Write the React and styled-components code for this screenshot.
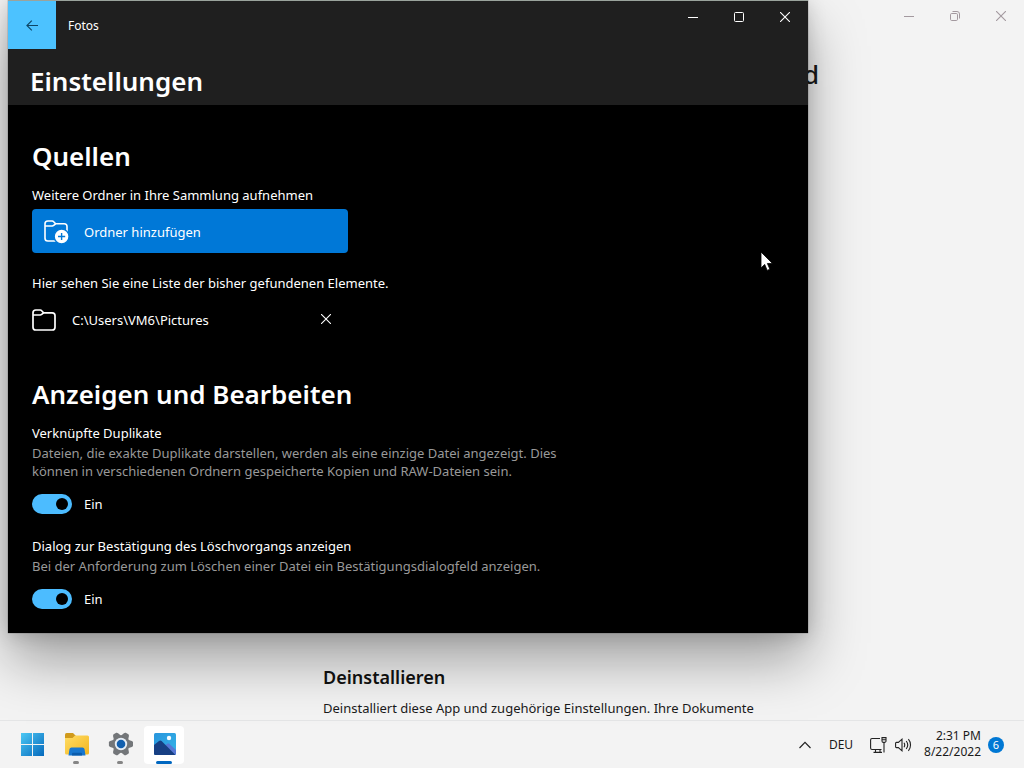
import React from "react";
import styled, { createGlobalStyle, css } from "styled-components";

const GlobalStyle = createGlobalStyle`
  *, *::before, *::after { box-sizing: border-box; }
  html, body { margin: 0; padding: 0; }
  body {
    font-family: "Segoe UI", "Noto Sans", sans-serif;
    font-size: 13px;
    background: #f3f3f3;
    overflow: hidden;
  }
  button { font: inherit; color: inherit; border: 0; padding: 0; background: none; }
  h1, h2, h3, p, ul { margin: 0; padding: 0; }
`;

const Desktop = styled.div`
  position: relative;
  display: flex;
  flex-direction: column;
  height: 100vh;
  color: #1a1a1a;
`;

/* Settings window in the background */
const SettingsWindow = styled.section`
  flex: 1;
  min-height: 0;
  display: flex;
  flex-direction: column;
  background: #f3f3f3;
  overflow: hidden;
`;

const Captions = styled.div`
  display: flex;
  justify-content: flex-end;
  flex: none;
  color: ${(p) => (p.$muted ? "#a3999f" : "#ffffff")};
`;

const CaptionButton = styled.button`
  width: 46px;
  height: 32px;
  display: grid;
  place-items: center;
`;

const SettingsTitle = styled.h1`
  padding: 24px 205px 0 0;
  text-align: right;
  font-size: 26px;
  line-height: 36px;
  font-weight: 500;
`;

const Uninstall = styled.div`
  margin-top: auto;
  padding: 0 24px 2px 323px;
`;

const UninstallTitle = styled.h2`
  font-size: 18px;
  line-height: 24px;
  font-weight: 600;
  color: #111;
  margin-bottom: 9px;
`;

const UninstallText = styled.p`
  line-height: 20px;
`;

/* Photos window */
const PhotosWindow = styled.main`
  position: absolute;
  top: 0;
  left: 8px;
  right: 216px;
  background: #000;
  color: #fff;
  border-top: 1px solid #9aa39c;
  box-shadow: 0 0 1px rgba(0, 0, 0, 0.6), 0 28px 52px rgba(0, 0, 0, 0.34), 0 2px 18px rgba(0, 0, 0, 0.16);
`;

const Header = styled.header`
  background: #1f1f1f;
`;

const TitleBar = styled.div`
  display: flex;
  height: 48px;
`;

const BackButton = styled.button`
  width: 48px;
  display: grid;
  place-items: center;
  background: #4cc2ff;
  color: #0d4565;
`;

const AppName = styled.span`
  flex: 1;
  padding-left: 12px;
  font-size: 12px;
  line-height: 50px;
`;

const PageTitle = styled.h1`
  padding: 14px 22px 6px;
  font-size: 26px;
  line-height: 36px;
  font-weight: 600;
`;

const Content = styled.div`
  padding: 33px 24px 24px;
`;

const Group = styled.section`
  & + & { margin-top: 40px; }
`;

const GroupTitle = styled.h2`
  font-size: 26px;
  line-height: 36px;
  font-weight: 600;
  margin-bottom: 11px;
`;

const Label = styled.p`
  line-height: 20px;
`;

const AddButton = styled.button`
  display: flex;
  align-items: center;
  gap: 14px;
  width: 316px;
  height: 44px;
  margin: 4px 0 20px;
  padding: 2px 12px 0;
  border-radius: 4px;
  background: #0078d7;
`;

const FolderList = styled.ul`
  list-style: none;
  margin-top: 11px;
`;

const FolderRow = styled.li`
  display: flex;
  align-items: center;
  gap: 16px;
  width: 316px;
  height: 32px;
`;

const FolderPath = styled.span`
  flex: 1;
`;

const RemoveButton = styled.button`
  width: 44px;
  height: 30px;
  align-self: flex-start;
  display: grid;
  place-items: center;
`;

const Setting = styled.div`
  & + & { margin-top: 22px; }
`;

const Description = styled.p`
  max-width: 550px;
  margin-top: 1px;
  line-height: 18px;
  color: #999;
`;

const SwitchLabel = styled.label`
  display: inline-flex;
  align-items: center;
  gap: 12px;
  margin-top: 14px;
  height: 20px;
  line-height: 22px;
  vertical-align: top;
`;

const Switch = styled.input`
  appearance: none;
  display: flex;
  align-items: center;
  justify-content: flex-end;
  width: 40px;
  height: 20px;
  margin: 0;
  padding: 0 4px;
  border-radius: 10px;
  background: #4cbcff;
  &::after {
    content: "";
    width: 12px;
    height: 12px;
    border-radius: 50%;
    background: #000;
  }
  &:not(:checked) { justify-content: flex-start; background: #666; }
`;

/* Taskbar */
const Taskbar = styled.footer`
  flex: none;
  display: flex;
  align-items: center;
  justify-content: space-between;
  height: 48px;
  padding: 0 12px;
  background: #f3f3f3;
  border-top: 1px solid #e4e5e6;
`;

const Apps = styled.nav`
  display: flex;
  gap: 4px;
`;

const AppButton = styled.button`
  width: 40px;
  height: 38px;
  display: flex;
  flex-direction: column;
  align-items: center;
  justify-content: flex-end;
  border-radius: 4px;
  &::after {
    content: "";
    width: 6px;
    height: 3px;
    margin-top: 5px;
    border-radius: 2px;
    background: transparent;
    ${(p) => p.$running && css`background: #858585;`}
    ${(p) => p.$active && css`width: 16px; background: #0067c0;`}
  }
  ${(p) => p.$active && css`background: #fff;`}
`;

const Tray = styled.div`
  display: flex;
  align-items: center;
  padding-right: 8px;
`;

const TrayButton = styled.button`
  display: grid;
  place-items: center;
  width: ${(p) => p.$width}px;
  height: 40px;
  font-size: 12px;
`;

const Clock = styled.time`
  width: 70px;
  text-align: right;
  font-size: 12px;
  line-height: 16px;
  padding-bottom: 2px;
`;

const Badge = styled.span`
  width: 16px;
  height: 16px;
  margin-left: 7px;
  border-radius: 50%;
  background: #0078d4;
  color: #fff;
  font-size: 11px;
  line-height: 16px;
  text-align: center;
`;

const Pointer = styled.svg`
  position: absolute;
  left: 760px;
  top: 251px;
  pointer-events: none;
`;

const MinimizeIcon = () => (
  <svg width="10" height="10" viewBox="0 0 10 10"><path d="M0 5.5h10" stroke="currentColor" /></svg>
);
const MaximizeIcon = () => (
  <svg width="10" height="10" viewBox="0 0 10 10"><rect x="0.5" y="0.5" width="9" height="9" rx="1" fill="none" stroke="currentColor" /></svg>
);
const RestoreIcon = () => (
  <svg width="10" height="10" viewBox="0 0 10 10" fill="none" stroke="currentColor">
    <rect x="0.5" y="2.5" width="7" height="7" rx="1.2" />
    <path d="M2.5.5H7A2.500 2.500 0 0 1 9.500 3v4.500" />
  </svg>
);
const CloseIcon = () => (
  <svg width="10" height="10" viewBox="0 0 10 10"><path d="M0 0l10 10M10 0L0 10" stroke="currentColor" strokeWidth="1.1" /></svg>
);
const BackIcon = () => (
  <svg width="12" height="11" viewBox="0 0 12 11" fill="none" stroke="currentColor" strokeWidth="1.1"><path d="M12 5.500H1M5.800.600L.900 5.500l4.900 4.900" /></svg>
);
const folderShape = "M1 6.500V3.800A2.800 2.800 0 0 1 3.800 1h4.400a2 2 0 0 1 1.500.700L11.600 3.800h8.600A2.800 2.800 0 0 1 23 6.600V18.200A2.800 2.800 0 0 1 20.200 21H3.800A2.800 2.800 0 0 1 1 18.200z";
const folderTab = "M1 6h7.200a2 2 0 0 0 1.500-.700L11.600 3.800";
const FolderIcon = () => (
  <svg width="24" height="22" viewBox="0 0 24 22" fill="none" stroke="#fff" strokeWidth="1.700"><path d={folderShape} /><path d={folderTab} /></svg>
);
const FolderAddIcon = () => (
  <svg width="26" height="24" viewBox="0 0 26 24" fill="none" stroke="#fff" strokeWidth="1.600">
    <path d={folderShape} /><path d={folderTab} />
    <circle cx="17.600" cy="16.500" r="7.400" fill="#fff" stroke="#0078d7" strokeWidth="1.300" />
    <path d="M17.600 12.900v7.200M14 16.500h7.200" stroke="#0078d7" strokeWidth="1.400" />
  </svg>
);

const StartIcon = () => (
  <svg width="24" height="24" viewBox="0 0 24 24">
    <defs><linearGradient id="start" x1="0" y1="0" x2="1" y2="1"><stop offset="0" stopColor="#4cc8f4" /><stop offset="1" stopColor="#0669bc" /></linearGradient></defs>
    <path fill="url(#start)" d="M1 1h11v11H1zM13 1h11v11H13zM1 13h11v11H1zM13 13h11v11H13z" />
  </svg>
);
const ExplorerIcon = () => (
  <svg width="26" height="24" viewBox="0 0 26 24">
    <defs><linearGradient id="folder" x1="0" y1="0" x2="1" y2="1"><stop offset="0" stopColor="#ffdd65" /><stop offset="1" stopColor="#f3b51f" /></linearGradient></defs>
    <path fill="#d09a1c" d="M2 2.500A1.500 1.500 0 0 1 3.500 1h6.500L12.500 3.500V9H2z" />
    <path fill="url(#folder)" d="M2 6h7.500L12 3.500h12.500A1.500 1.500 0 0 1 26 5v16a1.500 1.500 0 0 1-1.500 1.500h-21A1.500 1.500 0 0 1 2 21z" />
    <path fill="#1877cf" d="M5.500 23.500L6.500 17A2 2 0 0 1 8.500 15.500h11a2 2 0 0 1 2 1.500l1 6.500z" />
    <path fill="#0b5cab" d="M9 23.500v-1.700a1 1 0 0 1 1-1h8a1 1 0 0 1 1 1v1.700z" />
  </svg>
);
const SettingsIcon = () => (
  <svg width="26" height="24" viewBox="-14 -12 26 24">
    <g fill="#737679">
      <circle r="8.800" />
      {[0, 60, 120, 180, 240, 300].map((a) => (
        <path key={a} transform={`rotate(${a})`} d="M7-4.200L10.800-2.900Q12-2.400 12.100-1.500V1.500Q12 2.400 10.800 2.900L7 4.200z" />
      ))}
    </g>
    <circle r="6.200" fill="#e6edf5" />
    <circle r="4.300" fill="#125fae" />
  </svg>
);
const PhotosIcon = () => (
  <svg width="24" height="24" viewBox="0 0 24 24">
    <defs>
      <linearGradient id="sky" x1="0" y1="0" x2="1" y2="1"><stop offset="0" stopColor="#2793dc" /><stop offset="1" stopColor="#36b5e8" /></linearGradient>
      <clipPath id="frame"><rect x="2" y="1" width="22" height="22" rx="1.500" /></clipPath>
    </defs>
    <g clipPath="url(#frame)">
      <path fill="url(#sky)" d="M0 0h24v24H0z" />
      <path fill="#5577d5" d="M11 15l4.200-3.300q1-.700 2 0L24 18v6H11z" />
      <path fill="#173f83" d="M0 14.500l7-5.500q1.300-1 2.600 0L23 22.500V24H0z" />
      <circle cx="17" cy="6" r="2.200" fill="#f4fbff" />
    </g>
  </svg>
);
const ChevronIcon = () => (
  <svg width="12" height="8" viewBox="0 0 12 8" fill="none" stroke="#222" strokeWidth="1.200"><path d="M.500 7L6 1.300 11.500 7" /></svg>
);
const NetworkIcon = () => (
  <svg width="17" height="16" viewBox="0 0 17 16" fill="none" stroke="#222" strokeWidth="1.100">
    <path d="M10 1.500H2A1.500 1.500 0 0 0 .600 3v8A1.500 1.500 0 0 0 2 12.500h9.500M5.500 12.500v3M10 12.500v3M3.500 15.400H12M12 .600h4v3.300a1.500 1.500 0 0 1-1.500 1.500h-1A1.500 1.500 0 0 1 12 3.900zM12 2.700h4M14 5.500v10" />
  </svg>
);
const VolumeIcon = () => (
  <svg width="17" height="14" viewBox="0 0 17 14" fill="none" stroke="#222" strokeWidth="1.100">
    <path d="M.600 5.200v3.600a.800.800 0 0 0 .800.800h2L7 12.800V1.200L3.400 4.400h-2a.800.800 0 0 0-.800.800zM9 4.800a4 4 0 0 1 0 4.400M11.200 3a6.500 6.500 0 0 1 0 8M13.400 1.200a9 9 0 0 1 0 11.600" />
  </svg>
);

function CaptionControls({ muted }) {
  return (
    <Captions $muted={muted}>
      <CaptionButton aria-label="Minimieren"><MinimizeIcon /></CaptionButton>
      <CaptionButton aria-label={muted ? "Verkleinern" : "Maximieren"}>{muted ? <RestoreIcon /> : <MaximizeIcon />}</CaptionButton>
      <CaptionButton aria-label="Schließen"><CloseIcon /></CaptionButton>
    </Captions>
  );
}

function ToggleSetting({ title, description }) {
  return (
    <Setting>
      <Label>{title}</Label>
      <Description>{description}</Description>
      <SwitchLabel><Switch type="checkbox" defaultChecked />Ein</SwitchLabel>
    </Setting>
  );
}

export default function App() {
  return (
    <Desktop>
      <GlobalStyle />
      <SettingsWindow>
        <CaptionControls muted />
        <SettingsTitle>d</SettingsTitle>
        <Uninstall>
          <UninstallTitle>Deinstallieren</UninstallTitle>
          <UninstallText>Deinstalliert diese App und zugehörige Einstellungen. Ihre Dokumente</UninstallText>
        </Uninstall>
      </SettingsWindow>

      <PhotosWindow>
        <Header>
          <TitleBar>
            <BackButton aria-label="Zurück"><BackIcon /></BackButton>
            <AppName>Fotos</AppName>
            <CaptionControls />
          </TitleBar>
          <PageTitle>Einstellungen</PageTitle>
        </Header>
        <Content>
          <Group>
            <GroupTitle>Quellen</GroupTitle>
            <Label>Weitere Ordner in Ihre Sammlung aufnehmen</Label>
            <AddButton><FolderAddIcon />Ordner hinzufügen</AddButton>
            <Label>Hier sehen Sie eine Liste der bisher gefundenen Elemente.</Label>
            <FolderList>
              <FolderRow>
                <FolderIcon />
                <FolderPath>C:\Users\VM6\Pictures</FolderPath>
                <RemoveButton aria-label="Entfernen"><CloseIcon /></RemoveButton>
              </FolderRow>
            </FolderList>
          </Group>
          <Group>
            <GroupTitle>Anzeigen und Bearbeiten</GroupTitle>
            <ToggleSetting
              title="Verknüpfte Duplikate"
              description="Dateien, die exakte Duplikate darstellen, werden als eine einzige Datei angezeigt. Dies können in verschiedenen Ordnern gespeicherte Kopien und RAW-Dateien sein."
            />
            <ToggleSetting
              title="Dialog zur Bestätigung des Löschvorgangs anzeigen"
              description="Bei der Anforderung zum Löschen einer Datei ein Bestätigungsdialogfeld anzeigen."
            />
          </Group>
        </Content>
      </PhotosWindow>

      <Taskbar>
        <Apps aria-label="Taskleiste">
          <AppButton aria-label="Start"><StartIcon /></AppButton>
          <AppButton aria-label="Explorer" $running><ExplorerIcon /></AppButton>
          <AppButton aria-label="Einstellungen" $running><SettingsIcon /></AppButton>
          <AppButton aria-label="Fotos" $active><PhotosIcon /></AppButton>
        </Apps>
        <Tray>
          <TrayButton $width={32} aria-label="Ausgeblendete Symbole"><ChevronIcon /></TrayButton>
          <TrayButton $width={40}>DEU</TrayButton>
          <TrayButton $width={34} aria-label="Netzwerk"><NetworkIcon /></TrayButton>
          <TrayButton $width={16} aria-label="Lautstärke"><VolumeIcon /></TrayButton>
          <Clock>2:31 PM<br />8/22/2022</Clock>
          <Badge>6</Badge>
        </Tray>
      </Taskbar>

      <Pointer width="14" height="21" viewBox="0 0 14 21">
        <path d="M1 1v16l3.700-3.600 2.500 6 2.700-1.200-2.500-5.700h5.100z" fill="#fff" stroke="#000" strokeWidth=".800" />
      </Pointer>
    </Desktop>
  );
}
